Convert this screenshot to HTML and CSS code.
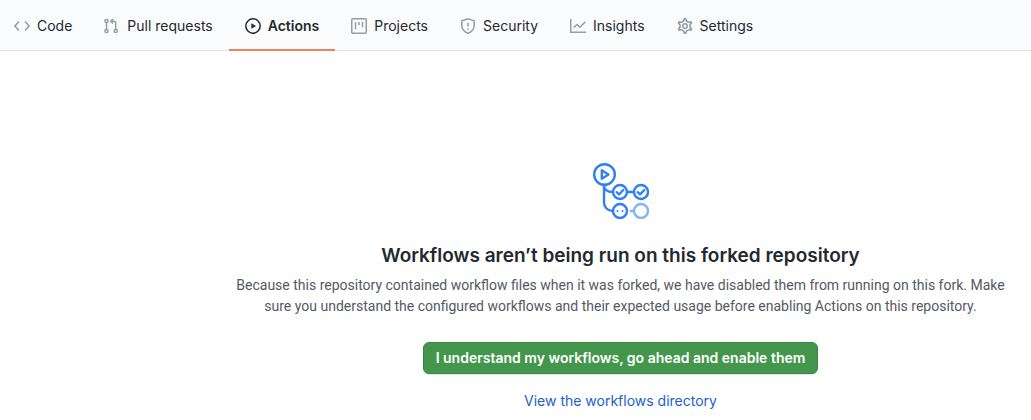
FILE: index.html
```html
<!DOCTYPE html>
<html lang="en">
<head>
<meta charset="utf-8">
<meta name="viewport" content="width=device-width, initial-scale=1">
<title>Actions</title>
<link rel="stylesheet" href="styles.css">
</head>
<body>
<nav class="tabs" aria-label="Repository">
  <a class="tab" href="#code">
    <svg class="icon" viewBox="0 0 16 16" aria-hidden="true"><path d="M5 3.500 .9 8 5 12.500M11 3.500 15.100 8 11 12.500"/></svg>
    <span>Code</span>
  </a>
  <a class="tab" href="#pulls">
    <svg class="icon" viewBox="0 0 16 16" aria-hidden="true"><circle cx="2.500" cy="3" r="1.6"/><circle cx="2.500" cy="13" r="1.6"/><circle cx="11.700" cy="13" r="1.6"/><path d="M2.500 4.800v6.400M11.700 11.200V5.200a2 2 0 0 0-2-2H7.300M9 1 6.800 3.200 9 5.400"/></svg>
    <span>Pull requests</span>
  </a>
  <a class="tab tab-current" href="#actions" aria-current="page">
    <svg class="icon" viewBox="0 0 16 16" aria-hidden="true"><circle cx="8" cy="8" r="7.2"/><path class="solid" d="M6.4 5.2v5.6L11 8z"/></svg>
    <span>Actions</span>
  </a>
  <a class="tab" href="#projects">
    <svg class="icon" viewBox="0 0 16 16" aria-hidden="true"><rect x=".75" y=".75" width="14.5" height="14.5" rx="1"/><path d="M4.5 4v7.2M8 4v3.2M11.5 4v5.2"/></svg>
    <span>Projects</span>
  </a>
  <a class="tab" href="#security">
    <svg class="icon" viewBox="0 0 16 16" aria-hidden="true"><path d="M8 .9 14.2 2.9V7.2c0 3.6-2 6.3-6.2 8-4.2-1.700-6.200-4.400-6.200-8V2.900zM8 4.700v3.700M8 10.300v1.500"/></svg>
    <span>Security</span>
  </a>
  <a class="tab" href="#insights">
    <svg class="icon" viewBox="0 0 16 16" aria-hidden="true"><path d="M.75 1v13.250H16M3.600 9.800 7 6.500l2.800 2.800L15.400 3.700"/></svg>
    <span>Insights</span>
  </a>
  <a class="tab" href="#settings">
    <svg class="icon" viewBox="0 0 16 16" aria-hidden="true"><circle cx="8" cy="8" r="2.300"/><g transform="translate(8 8) scale(1.1) translate(-8 -8)"><path d="M7.429 1.525a6.593 6.593 0 011.142 0c.036.003.108.036.137.146l.289 1.105c.147.56.55.967.997 1.189.174.086.341.183.501.29.417.278.97.423 1.53.27l1.102-.303c.11-.03.175.016.195.046.219.31.41.641.573.989.014.031.022.11-.059.19l-.815.806c-.411.406-.562.957-.53 1.456a4.588 4.588 0 010 .582c-.032.499.119 1.05.53 1.456l.815.806c.08.08.073.159.059.19a6.494 6.494 0 01-.573.99c-.02.029-.086.074-.195.045l-1.103-.303c-.559-.153-1.112-.008-1.529.27-.16.107-.327.204-.5.29-.449.222-.851.628-.998 1.189l-.289 1.105c-.029.11-.101.143-.137.146a6.613 6.613 0 01-1.142 0c-.036-.003-.108-.037-.137-.146l-.289-1.105c-.147-.56-.55-.967-.997-1.189a4.502 4.502 0 01-.501-.29c-.417-.278-.97-.423-1.53-.27l-1.102.303c-.11.03-.175-.016-.195-.046a6.492 6.492 0 01-.573-.989c-.014-.031-.022-.11.059-.19l.815-.806c.411-.406.562-.957.53-1.456a4.587 4.587 0 010-.582c.032-.499-.119-1.05-.53-1.456l-.815-.806c-.08-.08-.073-.159-.059-.19a6.44 6.44 0 01.573-.99c.02-.029.086-.075.195-.045l1.103.303c.559.153 1.112.008 1.529-.27.16-.107.327-.204.5-.29.449-.222.851-.628.998-1.189l.289-1.105c.029-.11.101-.143.137-.146z"/></g></svg>
    <span>Settings</span>
  </a>
</nav>
<main class="blank">
  <svg class="workflow" viewBox="0 0 56 56" aria-hidden="true">
    <circle cx="11.500" cy="11.500" r="10.300"/>
    <path d="M8.800 7.300v8.400l6.600-4.200zM11 22v17.500a8.500 8.500 0 0 0 8.500 8.500M11 22c0 4.500 3.500 7 8.500 7M34 29h7"/>
    <circle cx="27" cy="29" r="7"/>
    <circle cx="48" cy="29" r="7"/>
    <circle cx="27" cy="48" r="7"/>
    <path d="m23.700 29.200 2.300 2.300 4.300-4.500M44.700 29.200l2.300 2.300 4.300-4.500"/>
    <path class="dots" d="M24.500 48h.01M29.500 48h.01"/>
    <g class="pending"><circle cx="48" cy="48" r="7"/><path d="M37.700 48h1.500"/></g>
  </svg>
  <h1 class="title">Workflows aren’t being run on this forked repository</h1>
  <p class="text">Because this repository contained workflow files when it was forked, we have disabled them from running on this fork. Make sure you understand the configured workflows and their expected usage before enabling Actions on this repository.</p>
  <button class="enable" type="button">I understand my workflows, go ahead and enable them</button>
  <a class="link" href="#workflows">View the workflows directory</a>
</main>
</body>
</html>
```
FILE: styles.css
```css
* { box-sizing: border-box; }
body {
  margin: 0;
  background: #fff;
  color: #24292e;
  font: 14px/21px Inter, "Liberation Sans", sans-serif;
}
.tabs {
  display: flex;
  height: 51px;
  background: #fafbfc;
  border-bottom: 1px solid #e1e4e8;
}
.tab {
  display: flex;
  align-items: center;
  gap: 7px;
  height: 51px;
  padding: 2px 16px 0;
  border-bottom: 2px solid transparent;
  color: inherit;
  text-decoration: none;
  white-space: nowrap;
}
.tab:first-child { padding-left: 14px; }
.tab-current { font-weight: 600; border-color: #f0805f; }
.icon {
  width: 16px;
  height: 16px;
  flex: none;
  fill: none;
  stroke: #959da5;
  stroke-width: 1.5;
}
.tab-current .icon { stroke: #24292e; }
.tab-current .solid { fill: #24292e; stroke: none; }
.blank {
  display: flex;
  flex-direction: column;
  align-items: center;
  padding: 112px 8px 8px 218px;
  text-align: center;
}
.workflow {
  width: 56px;
  height: 56px;
  fill: none;
  stroke: #2f80f6;
  stroke-width: 2.4;
  stroke-linecap: round;
  stroke-linejoin: round;
}
.dots { stroke-width: 2; }
.pending { stroke: #82b4fa; }
.title {
  margin: 21px 0 3px;
  font-size: 19px;
  line-height: 32px;
  font-weight: 600;
}
.text {
  max-width: 784px;
  margin: 0;
  color: #535a63;
  font-family: Roboto, "Liberation Sans", sans-serif;
}
.enable {
  margin: 25px 0 16px;
  height: 32px;
  padding: 0 12px 2px;
  border: 1px solid #3a8545;
  border-radius: 6px;
  background: #44964d;
  box-shadow: 0 1px 0 rgba(27, 31, 35, 0.1);
  color: #fff;
  font: inherit;
  font-weight: 600;
}
.link { color: #1b5fcb; text-decoration: none; }
```
